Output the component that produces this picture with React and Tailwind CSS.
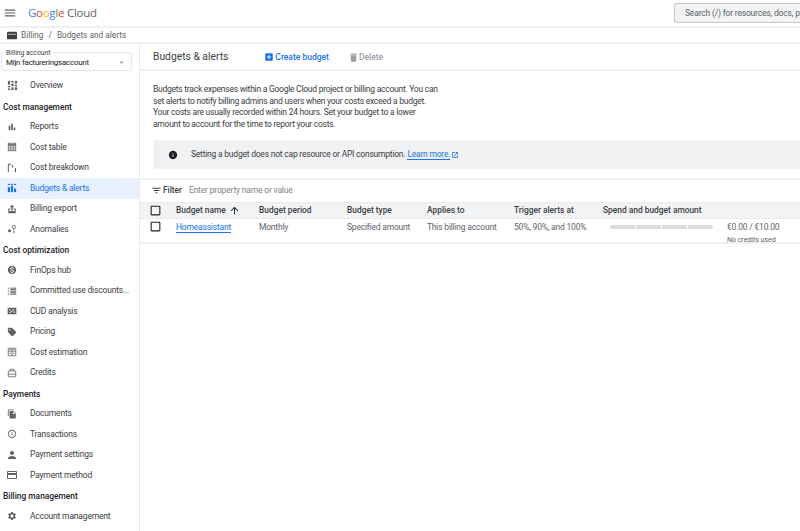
import React from "react";
import {
  MdMenu,
  MdBarChart,
  MdMonetizationOn,
  MdSell,
  MdFileCopy,
  MdOutlineSchedule,
  MdPerson,
  MdOutlineCreditCard,
  MdSettings,
  MdAddBox,
  MdDelete,
  MdInfo,
  MdFilterList,
  MdArrowUpward,
  MdOpenInNew,
  MdArrowDropDown,
  MdOutlineCheckBoxOutlineBlank,
} from "react-icons/md";

const OverviewIcon = ({ className }) => (
  <svg viewBox="0 0 12 12" className={className} fill="currentColor">
    <rect x="1" y="1" width="2.4" height="4" />
    <rect x="1" y="6.4" width="2.4" height="1.6" />
    <rect x="1" y="9.2" width="2.4" height="1.8" />
    <rect x="4.8" y="1" width="2.4" height="1.8" />
    <rect x="4.8" y="4" width="2.4" height="2.8" />
    <rect x="4.8" y="8" width="2.4" height="3" />
    <rect x="8.6" y="1" width="2.4" height="3" />
    <rect x="8.6" y="5.2" width="2.4" height="1.6" />
    <rect x="8.6" y="8" width="2.4" height="3" />
  </svg>
);

const TableIcon = ({ className }) => (
  <svg viewBox="0 0 12 12" className={className} fill="none" stroke="currentColor" strokeWidth="1">
    <rect x="1.5" y="1.5" width="9" height="9" />
    <path d="M1.5 3.6h9" strokeWidth="2" />
    <path d="M1.5 6.2h9M1.5 8.4h9M4.5 5v5.5M7.5 5v5.5" strokeWidth="0.8" />
  </svg>
);

const BreakdownIcon = ({ className }) => (
  <svg viewBox="0 0 12 12" className={className} fill="currentColor">
    <path d="M1 1h4v1.2H2.2V11H1z" />
    <rect x="6" y="2.6" width="1.4" height="3" />
    <rect x="9.4" y="6" width="1.4" height="5" />
  </svg>
);

const BudgetIcon = ({ className }) => (
  <svg viewBox="0 0 12 12" className={className} fill="currentColor">
    <rect x="1" y="1" width="2.6" height="1.4" />
    <rect x="4.7" y="1" width="2.6" height="1.4" />
    <rect x="8.4" y="1" width="2.6" height="1.4" />
    <rect x="1" y="5" width="2.6" height="6" />
    <rect x="4.7" y="3.4" width="2.6" height="7.6" />
    <rect x="8.4" y="6.6" width="2.6" height="4.4" />
  </svg>
);

const ExportIcon = ({ className }) => (
  <svg viewBox="0 0 12 12" className={className} fill="currentColor">
    <path d="M6 1 3.2 3.8h2V8h1.6V3.8h2z" />
    <path d="M1.5 5.5h2.6v1.2H2.8v3h6.4v-3H7.9V5.5h2.6V11h-9z" />
    <rect x="2.8" y="8.4" width="6.4" height="1.4" />
  </svg>
);

const AnomalyIcon = ({ className }) => (
  <svg viewBox="0 0 12 12" className={className} fill="none" stroke="currentColor">
    <circle cx="3" cy="8" r="1.8" fill="currentColor" stroke="none" />
    <circle cx="8.2" cy="3.6" r="2" strokeWidth="1" />
    <path d="M8.2 6v4" strokeWidth="1" />
    <circle cx="8.2" cy="10.4" r="0.7" fill="currentColor" stroke="none" />
  </svg>
);

const CommittedIcon = ({ className }) => (
  <svg viewBox="0 0 12 12" className={className} fill="currentColor">
    <rect x="1" y="2" width="1.6" height="1.2" />
    <rect x="1" y="5.4" width="1.6" height="1.2" />
    <rect x="1" y="8.8" width="1.6" height="1.2" />
    <rect x="4" y="2" width="7" height="1.2" />
    <rect x="4" y="3.8" width="7" height="1.2" />
    <rect x="4" y="5.6" width="7" height="1.2" />
    <rect x="4" y="7.4" width="7" height="1.2" />
    <rect x="4" y="9.2" width="7" height="1.2" />
  </svg>
);

const CudIcon = ({ className }) => (
  <svg viewBox="0 0 12 12" className={className} fill="currentColor">
    <path d="M.8 2h10.4v8H.8zM2.6 4v1.4H4V4zM8 6.6V8h1.4V6.6zM8.4 3.6 2.8 8.2l.7.5 5.6-4.6z" fillRule="evenodd" />
  </svg>
);

const EstimationIcon = ({ className }) => (
  <svg viewBox="0 0 12 12" className={className} fill="none" stroke="currentColor" strokeWidth="1">
    <rect x="1.5" y="1.5" width="9" height="9" rx="0.6" />
    <path d="M1.5 5h9M6 5v5.5M3 3.2h6M3 7.5h1.8M7.2 7.5h1.8" />
  </svg>
);

const CreditsIcon = ({ className }) => (
  <svg viewBox="0 0 12 12" className={className} fill="none" stroke="currentColor" strokeWidth="1">
    <rect x="1.5" y="3.6" width="9" height="6.9" rx="0.5" />
    <path d="M1.5 7.4h9" />
    <path d="M3.6 3.6V1.6M8.4 3.6V1.6M3.6 1.6h4.8" strokeWidth="0.9" />
  </svg>
);

const CardCrumbIcon = ({ className }) => (
  <svg viewBox="0 0 12 10" className={className}>
    <rect x="0" y="0.5" width="12" height="9" rx="0.8" fill="#3c4043" />
    <rect x="1" y="3" width="10" height="1" fill="#c7c9cc" />
  </svg>
);

const sections = [
  {
    items: [{ label: "Overview", icon: OverviewIcon, size: "size-[11px]" }],
  },
  {
    title: "Cost management",
    items: [
      { label: "Reports", icon: MdBarChart },
      { label: "Cost table", icon: TableIcon },
      { label: "Cost breakdown", icon: BreakdownIcon },
      { label: "Budgets & alerts", icon: BudgetIcon, active: true },
      { label: "Billing export", icon: ExportIcon },
      { label: "Anomalies", icon: AnomalyIcon },
    ],
  },
  {
    title: "Cost optimization",
    items: [
      { label: "FinOps hub", icon: MdMonetizationOn },
      { label: "Committed use discounts...", icon: CommittedIcon },
      { label: "CUD analysis", icon: CudIcon },
      { label: "Pricing", icon: MdSell },
      { label: "Cost estimation", icon: EstimationIcon },
      { label: "Credits", icon: CreditsIcon },
    ],
  },
  {
    title: "Payments",
    items: [
      { label: "Documents", icon: MdFileCopy },
      { label: "Transactions", icon: MdOutlineSchedule },
      { label: "Payment settings", icon: MdPerson, size: "size-[12px]" },
      { label: "Payment method", icon: MdOutlineCreditCard, size: "size-[12px]" },
    ],
  },
  {
    title: "Billing management",
    items: [{ label: "Account management", icon: MdSettings }],
  },
];

const NavItem = ({ item }) => {
  const Icon = item.icon;
  return (
    <div
      className={`flex h-[20.5px] items-center text-[8.5px] tracking-[-0.18px] ${
        item.active ? "bg-[#e8f0fe] text-[#1a73e8]" : "text-[#3c4043]"
      }`}
    >
      <span
        className={`flex w-[24px] shrink-0 items-center justify-center ${
          item.active ? "text-[#1a73e8]" : "text-[#5f6368]"
        }`}
      >
        <Icon className={item.size || "size-[10px]"} />
      </span>
      <span className="ml-[6px] whitespace-nowrap">{item.label}</span>
    </div>
  );
};

const Sidebar = () => (
  <aside className="w-[140px] shrink-0 border-r border-[#e8eaed]">
    <div className="pl-[1px] pt-[8px] pb-[4.5px]">
      <div className="relative flex h-[19px] w-[131px] items-center justify-between rounded-[3px] border border-[#e3e5e8] pt-[2px] pl-[4px] pr-[5px]">
        <span className="absolute -top-[4px] left-[2px] bg-white px-[2px] text-[6.8px] leading-[8px] text-[#3c4043]">
          Billing account
        </span>
        <span className="text-[8px] tracking-[-0.25px] text-[#202124]">Mijn factureringsaccount</span>
        <MdArrowDropDown className="size-[9px] text-[#80868b]" />
      </div>
    </div>
    {sections.map((section, i) => (
      <div key={i}>
        {section.title && (
          <div className="flex h-[20.5px] items-center pt-[2px] pl-[3px] text-[8.4px] font-medium text-[#202124]">
            {section.title}
          </div>
        )}
        {section.items.map((item) => (
          <NavItem key={item.label} item={item} />
        ))}
      </div>
    ))}
  </aside>
);

const Header = () => (
  <header className="flex h-[28px] items-center border-b-2 border-[#eff0f1]">
    <MdMenu className="ml-[3px] size-[14px] text-[#5f6368]" />
    <div className="ml-[11px] flex items-center font-['Open_Sans',sans-serif] text-[11.5px] leading-none tracking-[-0.3px]">
      <span className="text-[#4285f4]">G</span>
      <span className="text-[#ea4335]">o</span>
      <span className="text-[#fbbc05]">o</span>
      <span className="text-[#4285f4]">g</span>
      <span className="text-[#34a853]">l</span>
      <span className="text-[#ea4335]">e</span>
      <span className="ml-[3px] text-[#5f6368]">Cloud</span>
    </div>
    <div className="ml-auto mt-[3px] flex h-[20px] w-[126px] items-center self-start overflow-hidden rounded-l-[3px] border border-r-0 border-[#c4c7cb] bg-[#f1f3f4] pl-[10px] text-[8.5px] tracking-[-0.18px] whitespace-nowrap text-[#5f6368]">
      Search (/) for resources, docs, products
    </div>
  </header>
);

const Breadcrumb = () => (
  <div className="flex h-[16px] items-center border-b-2 border-[#eff0f1] pl-[7px] text-[8.3px] text-[#5f6368]">
    <CardCrumbIcon className="h-[9px] w-[10px]" />
    <span className="ml-[4px]">Billing</span>
    <span className="mx-[5px]">/</span>
    <span>Budgets and alerts</span>
  </div>
);

const Toolbar = () => (
  <div className="flex h-[27px] items-center border-b-2 border-[#eff0f1] pt-[1px] pl-[13px]">
    <h1 className="text-[10.3px] text-[#3c4043]">Budgets &amp; alerts</h1>
    <button className="ml-[36px] flex items-center text-[8.5px] font-medium text-[#1a73e8]">
      <MdAddBox className="mr-[1px] size-[10px]" />
      Create budget
    </button>
    <button className="ml-[19px] flex items-center text-[8.5px] font-medium text-[#9aa0a6]">
      <MdDelete className="size-[11px]" />
      Delete
    </button>
  </div>
);

const Notice = () => (
  <div className="ml-[13px] mt-[10px] flex h-[29px] items-center rounded-l-[3px] bg-[#f0f1f3] pl-[15px] text-[8.5px] tracking-[-0.22px] text-[#3c4043]">
    <MdInfo className="size-[10px] text-[#202124]" />
    <span className="ml-[13px]">Setting a budget does not cap resource or API consumption.</span>
    <a className="ml-[2px] border-b border-[#1a73e8] leading-[10px] text-[#1a73e8]">Learn more.</a>
    <MdOpenInNew className="ml-[1px] size-[8px] text-[#1a73e8]" />
  </div>
);

const cols = "grid grid-cols-[36px_83px_88px_80px_87px_89px_1fr] items-center";

const Budgets = () => (
  <div>
    <div className="mt-[9px] flex h-[24px] items-center border-t-2 border-[#eff0f1] pb-[2px] pl-[11px]">
      <MdFilterList className="size-[11px] text-[#3c4043]" />
      <span className="ml-[1px] text-[8.3px] font-medium text-[#3c4043]">Filter</span>
      <span className="ml-[7px] text-[8.5px] tracking-[-0.18px] text-[#80868b]">Enter property name or value</span>
    </div>
    <div className={`${cols} h-[17px] border-y border-[#e8eaed] bg-[#f1f3f4] text-[8.4px] font-medium text-[#3c4043]`}>
      <MdOutlineCheckBoxOutlineBlank className="ml-[9px] size-[13px] text-[#202124]" />
      <span className="flex items-center">
        Budget name
        <MdArrowUpward className="ml-[3px] size-[11px] text-[#202124]" />
      </span>
      <span>Budget period</span>
      <span>Budget type</span>
      <span>Applies to</span>
      <span>Trigger alerts at</span>
      <span className="whitespace-nowrap">Spend and budget amount</span>
    </div>
    <div className={`${cols} h-[25px] items-start border-b-2 border-[#eff0f1] text-[8.5px] tracking-[-0.2px] text-[#5f6368]`}>
      <MdOutlineCheckBoxOutlineBlank className="ml-[9px] mt-[1px] size-[13px] text-[#202124]" />
      <span className="mt-[2px]">
        <a className="border-b border-[#1a73e8] text-[#1a73e8]">Homeassistant</a>
      </span>
      <span className="mt-[2px]">Monthly</span>
      <span className="mt-[2px]">Specified amount</span>
      <span className="mt-[2px] whitespace-nowrap">This billing account</span>
      <span className="mt-[2px] whitespace-nowrap">50%, 90%, and 100%</span>
      <div className="flex">
        <div className="ml-[7px] mt-[6px] flex h-[4px] w-[103px] gap-[1px] overflow-hidden rounded-full">
          <span className="flex-1 bg-[#dadce0]" />
          <span className="flex-1 bg-[#dadce0]" />
          <span className="flex-1 bg-[#dadce0]" />
          <span className="flex-1 bg-[#dadce0]" />
        </div>
        <div className="ml-[14px] mt-[2px] whitespace-nowrap">
          <div>€0.00 / €10.00</div>
          <div className="mt-[1px] text-[7.2px] tracking-[-0.1px] leading-[9px]">No credits used</div>
        </div>
      </div>
    </div>
  </div>
);

export default function App() {
  return (
    <div className="h-[531px] w-[800px] overflow-hidden bg-white font-['Roboto',sans-serif]">
      <Header />
      <Breadcrumb />
      <div className="flex h-[487px]">
        <Sidebar />
        <main className="min-w-0 flex-1">
          <Toolbar />
          <p className="ml-[13px] mt-[13px] w-[287px] text-[8.5px] tracking-[-0.25px] leading-[11.5px] text-[#3c4043]">
            Budgets track expenses within a Google Cloud project or billing account. You can set alerts to notify
            billing admins and users when your costs exceed a budget. Your costs are usually recorded within 24 hours.
            Set your budget to a lower amount to account for the time to report your costs.
          </p>
          <Notice />
          <Budgets />
        </main>
      </div>
    </div>
  );
}
